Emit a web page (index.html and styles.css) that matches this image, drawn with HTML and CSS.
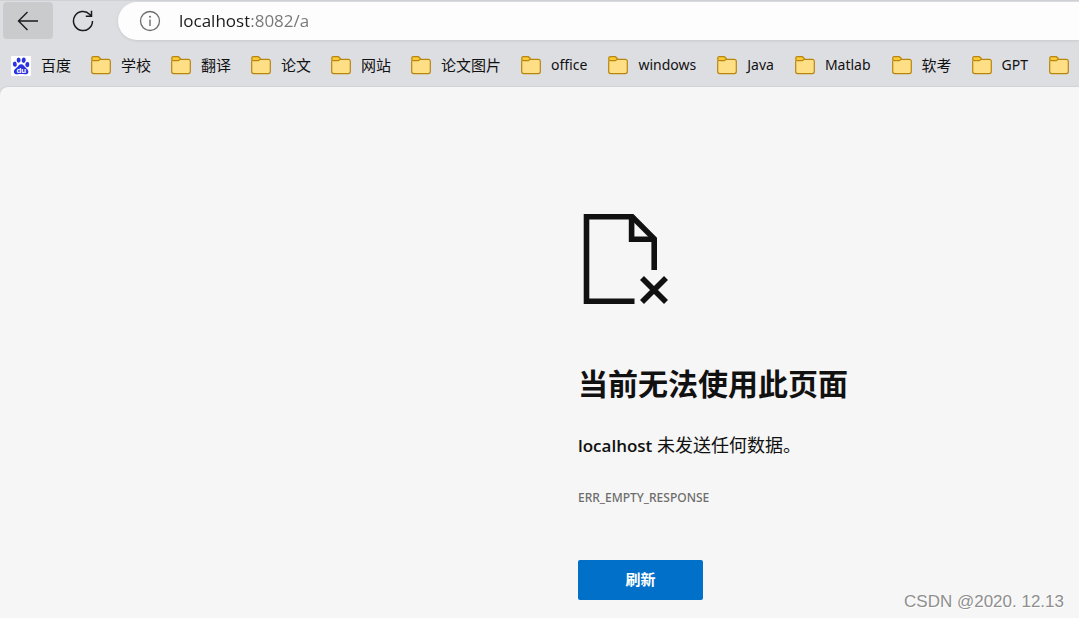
FILE: index.html
```html
<!DOCTYPE html>
<html lang="zh-CN">
<head>
<meta charset="utf-8">
<meta name="viewport" content="width=device-width, initial-scale=1">
<title>localhost</title>
<link rel="stylesheet" href="styles.css">
</head>
<body>
<svg class="defs" aria-hidden="true">
  <symbol id="folder" viewBox="0 0 20 20">
    <path d="M.7 4.5V15.6a2 2 0 0 0 2 2H17.3a2 2 0 0 0 2-2V5.4a2 2 0 0 0-2-2H9" fill="#ffdf85" stroke="#b8860f" stroke-width="1.2"/>
    <path d="M2.4 .7H7.3L9.2 2.3V3.2L7.4 4.6H2.4a1.7 1.7 0 0 1-1.7-1.7v-.5A1.7 1.7 0 0 1 2.4 .7Z" fill="#fbca36" stroke="#b8860f" stroke-width="1.2"/>
  </symbol>
</svg>
<header class="browser">
  <div class="toolbar">
    <button class="tool tool-back" type="button" aria-label="后退">
      <svg width="22" height="22" viewBox="0 0 22 22"><path d="M21 11H1.5M10.5 2L1.5 11L10.5 20" fill="none" stroke="#1b1b1b" stroke-width="1.4"/></svg>
    </button>
    <button class="tool" type="button" aria-label="重新加载">
      <svg width="22" height="22" viewBox="0 0 22 22"><path d="M20.5 11A9.5 9.5 0 1 1 17.8 4.4L19.4 6M19.5 .8V6.2H13.8" fill="none" stroke="#1b1b1b" stroke-width="1.5"/></svg>
    </button>
    <div class="address">
      <svg width="22" height="22" viewBox="0 0 22 22" aria-hidden="true"><circle cx="11" cy="11" r="9.5" fill="none" stroke="#6d6d6d" stroke-width="1.3"/><path d="M11 9.5V16" stroke="#6d6d6d" stroke-width="1.4"/><circle cx="11" cy="6.8" r="1" fill="#6d6d6d"/></svg>
      <input class="url" type="text" value="localhost:8082/a" aria-label="地址">
    </div>
  </div>
  <nav class="bookmarks" aria-label="收藏夹">
    <a class="bookmark" href="#"><svg class="mark" viewBox="0 0 20 20"><rect width="20" height="20" rx="1" fill="#fff"/><g fill="#2932e1"><ellipse cx="3.8" cy="8.2" rx="2" ry="2.6" transform="rotate(-12 3.8 8.2)"/><ellipse cx="7.6" cy="4.1" rx="2" ry="2.7"/><ellipse cx="12.7" cy="4.2" rx="2" ry="2.7" transform="rotate(10 12.7 4.2)"/><ellipse cx="16.3" cy="8.6" rx="2" ry="2.6" transform="rotate(8 16.3 8.6)"/><path d="M10.2 8.2C8 8.2 7.5 10 5.8 11.5C4.2 12.9 2.8 13.9 2.9 15.7C3 17.9 4.8 18.5 6.7 18.3C8.9 18 11.3 18 13.4 18.3C15.5 18.6 17.3 17.9 17.4 15.8C17.4 13.7 15.6 12.6 14.3 11.2C12.9 9.7 12.3 8.2 10.2 8.2Z"/></g><text class="du" x="10.3" y="16.8" text-anchor="middle">du</text></svg><span class="label">百度</span></a>
    <a class="bookmark" href="#"><svg class="mark"><use href="#folder"/></svg><span class="label">学校</span></a>
    <a class="bookmark" href="#"><svg class="mark"><use href="#folder"/></svg><span class="label">翻译</span></a>
    <a class="bookmark" href="#"><svg class="mark"><use href="#folder"/></svg><span class="label">论文</span></a>
    <a class="bookmark" href="#"><svg class="mark"><use href="#folder"/></svg><span class="label">网站</span></a>
    <a class="bookmark" href="#"><svg class="mark"><use href="#folder"/></svg><span class="label">论文图片</span></a>
    <a class="bookmark" href="#"><svg class="mark"><use href="#folder"/></svg><span class="label latin">office</span></a>
    <a class="bookmark" href="#"><svg class="mark"><use href="#folder"/></svg><span class="label latin">windows</span></a>
    <a class="bookmark" href="#"><svg class="mark"><use href="#folder"/></svg><span class="label latin">Java</span></a>
    <a class="bookmark" href="#"><svg class="mark"><use href="#folder"/></svg><span class="label latin">Matlab</span></a>
    <a class="bookmark" href="#"><svg class="mark"><use href="#folder"/></svg><span class="label">软考</span></a>
    <a class="bookmark" href="#"><svg class="mark"><use href="#folder"/></svg><span class="label latin">GPT</span></a>
    <a class="bookmark" href="#" aria-label="文件夹"><svg class="mark"><use href="#folder"/></svg></a>
  </nav>
</header>
<main class="page">
  <section class="error">
    <svg class="error-icon" width="90" height="92" viewBox="0 0 90 92" aria-hidden="true">
      <g fill="none" stroke="#111" stroke-width="5.6">
        <path d="M56.5 88.2H8.5V3.8H54.2L76.2 25.8V57"/>
        <path d="M53.6 3.8V26.2H76.2"/>
        <path d="M64 65L88 89M88 65L64 89"/>
      </g>
    </svg>
    <h1 class="title">当前无法使用此页面</h1>
    <p class="summary"><strong class="host">localhost</strong> 未发送任何数据。</p>
    <p class="code">ERR_EMPTY_RESPONSE</p>
    <button class="refresh" type="button">刷新</button>
  </section>
  <div class="watermark">CSDN @2020. 12.13</div>
</main>
</body>
</html>
```
FILE: styles.css
```css
* { box-sizing: border-box; }

body {
  display: flex;
  flex-direction: column;
  min-height: 100vh;
  margin: 0;
  overflow-x: hidden;
  background: #dddee2;
  color: #111;
  font-family: "Noto Sans", "Noto Sans CJK SC", sans-serif;
}

button, input { font-family: inherit; }

.defs { position: absolute; width: 0; height: 0; }

.browser { border-top: 1px solid #d0d1d5; }

.toolbar {
  display: flex;
  align-items: center;
  gap: 5px;
  height: 39px;
  padding-left: 3px;
}

.tool {
  display: grid;
  place-items: center;
  flex: none;
  width: 50px;
  height: 37px;
  padding: 0;
  border: 0;
  border-radius: 4px;
  background: transparent;
}

.tool-back { background: #cacbcd; }

.address {
  display: flex;
  flex: 1;
  align-items: center;
  gap: 18px;
  height: 38px;
  margin-left: 5px;
  padding-left: 21px;
  border-radius: 19px 0 0 19px;
  background: #fdfdfd;
  box-shadow: 0 1px 3px #c8c9cd;
}

.url {
  flex: 1;
  min-width: 0;
  padding: 0;
  border: 0;
  outline: 0;
  background: linear-gradient(to right, #1b1b1b 70px, #767676 70px);
  background-clip: text;
  color: transparent;
  font-family: "Open Sans", sans-serif;
  font-size: 17px;
  line-height: 24px;
}

.bookmarks {
  display: flex;
  align-items: center;
  gap: 20px;
  height: 47px;
  padding: 4px 0 0 11px;
}

.bookmark {
  display: flex;
  flex: none;
  align-items: center;
  gap: 10px;
  color: #111;
  text-decoration: none;
}

.mark { width: 20px; height: 20px; }

.label {
  padding-bottom: 2px;
  font-size: 15px;
  line-height: 20px;
}

.latin {
  padding-right: 1px;
  font-size: 14px;
}

.du { fill: #fff; font: bold 8px "Liberation Sans", sans-serif; }

.page {
  position: relative;
  display: grid;
  grid-template-columns: 578fr 501fr;
  flex: 1;
  border-radius: 8px 0 0 0;
  background: #f6f6f6;
  box-shadow: 0 0 2px #b8b9bd;
}

.error {
  grid-column: 2;
  padding: 126px 0 18px;
}

.error-icon { display: block; }

.title {
  margin: 59px 0 0;
  font-size: 30px;
  line-height: 40px;
}

.summary {
  margin: 27px 0 0;
  font-size: 18px;
  line-height: 28px;
}

.host {
  font-family: "Open Sans", sans-serif;
  font-size: 17px;
  font-weight: 600;
}

.code {
  margin: 28px 0 0;
  color: #6d6d6d;
  font-size: 12px;
  font-weight: 500;
  line-height: 20px;
}

.refresh {
  display: block;
  width: 125px;
  height: 40px;
  margin-top: 52px;
  padding: 0 0 3px;
  border: 0;
  border-radius: 2px;
  background: #0070c9;
  color: #fff;
  font-size: 15px;
  font-weight: 700;
}

.watermark {
  position: absolute;
  right: 15px;
  bottom: 6px;
  color: #8f8f8f;
  font: 17px/20px "Liberation Sans", sans-serif;
  text-shadow: 1px 1px 0 #fff;
}
```
